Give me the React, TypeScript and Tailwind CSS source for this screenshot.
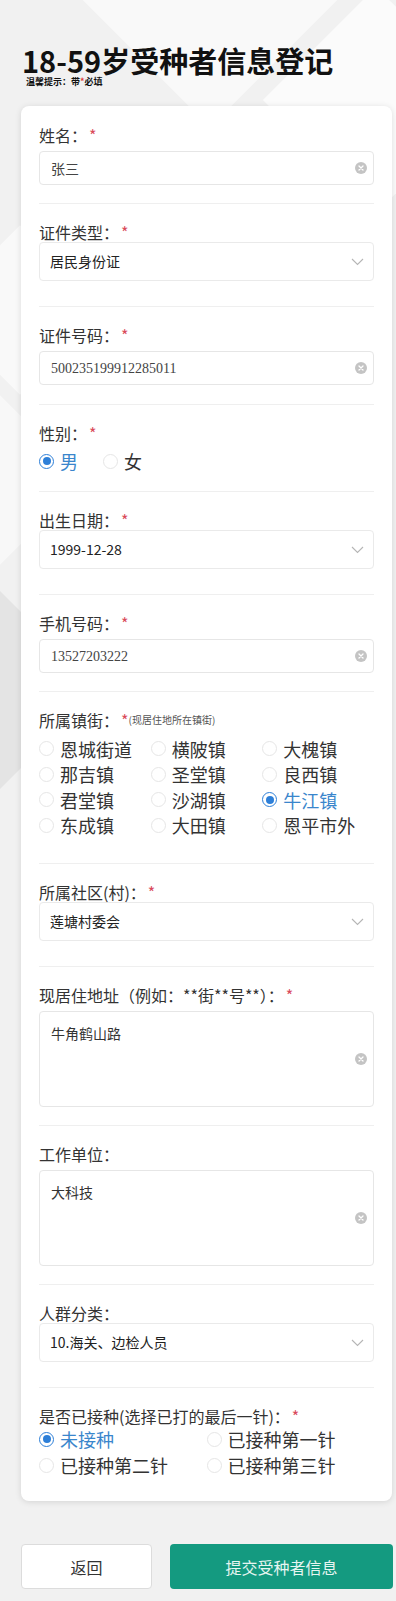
import React from 'react';

const towns = [
    '恩城街道', '横陂镇', '大槐镇',
    '那吉镇', '圣堂镇', '良西镇',
    '君堂镇', '沙湖镇', '牛江镇',
    '东成镇', '大田镇', '恩平市外',
];

const doses = ['未接种', '已接种第一针', '已接种第二针', '已接种第三针'];

function Label({ text, required, hint }: { text: string; required?: boolean; hint?: string }) {
    return (
        <div className="flex h-5 items-center text-[16px] leading-5 text-[#333]">
            <span>{text}</span>
            {required && <span className="ml-[2px] text-[#d94a5a]">*</span>}
            {hint && <span className="text-[10px] text-[#555]">{hint}</span>}
        </div>
    );
}

function ClearIcon() {
    return (
        <svg width="12" height="12" viewBox="0 0 12 12" className="shrink-0">
            <circle cx="6" cy="6" r="6" fill="#c4c4c4" />
            <path d="M4 4L8 8M8 4L4 8" stroke="#fff" strokeWidth="1.3" strokeLinecap="round" />
        </svg>
    );
}

function Chevron() {
    return (
        <svg width="13" height="8" viewBox="0 0 13 8" className="shrink-0">
            <path d="M1 1L6.5 6.5L12 1" fill="none" stroke="#b5b5b5" strokeWidth="1.1" />
        </svg>
    );
}

function TextInput({ value, serif }: { value: string; serif?: boolean }) {
    return (
        <div className="mt-[6px] flex h-[34px] items-center justify-between rounded-[4px] border border-[#e6e6e6] pl-[11px] pr-[6px]">
            <span className={serif ? "font-['Liberation_Serif','Noto_Sans_CJK_SC',serif] text-[14px] text-[#444]" : "text-[14px] text-[#444]"}>{value}</span>
            <ClearIcon />
        </div>
    );
}

function Select({ value }: { value: string }) {
    return (
        <div className="flex h-[39px] items-center justify-between rounded-[4px] border border-[#eaeaea] pl-[10px] pr-[9px]">
            <span className="text-[14px] text-[#222]">{value}</span>
            <Chevron />
        </div>
    );
}

function TextArea({ value }: { value: string }) {
    return (
        <div className="relative mt-[6px] h-[96px] rounded-[4px] border border-[#e6e6e6] pl-[11px] pr-[6px] pt-[8px]">
            <span className="text-[14px] leading-5 text-[#333]">{value}</span>
            <div className="absolute right-[6px] top-1/2 -translate-y-1/2">
                <ClearIcon />
            </div>
        </div>
    );
}

function Radio({ label, checked }: { label: string; checked?: boolean }) {
    return (
        <div className="flex items-center gap-[6px]">
            {checked ? (
                <span className="flex h-[15px] w-[15px] items-center justify-center rounded-full border border-[#2d7fd8] bg-white">
                    <span className="h-[8px] w-[8px] rounded-full bg-[#2d7fd8]" />
                </span>
            ) : (
                <span className="h-[15px] w-[15px] rounded-full border border-[#e6e6e6] bg-white" />
            )}
            <span className={checked ? 'text-[18px] leading-6 text-[#3a86cc]' : 'text-[18px] leading-6 text-[#333]'}>{label}</span>
        </div>
    );
}

function Section({ children, first, pb }: { children: React.ReactNode; first?: boolean; pb: string }) {
    return (
        <div className={(first ? 'pt-[19px] ' : 'border-t border-[#efefef] pt-[18px] ') + pb}>
            {children}
        </div>
    );
}

export default function App() {
    return (
        <div className="relative min-h-[1601px] overflow-hidden bg-[#f1f1f1] font-['Noto_Sans_CJK_SC','Noto_Sans',sans-serif]">
            {/* background decoration */}
            <div className="pointer-events-none absolute -left-[40px] top-[250px] h-[120px] w-[120px] rotate-45 bg-white/60" />
            <div className="pointer-events-none absolute -left-[60px] top-[420px] h-[120px] w-[120px] rotate-45 bg-white/50" />
            <div className="pointer-events-none absolute -left-[70px] top-[620px] h-[140px] w-[140px] rotate-45 bg-[#e4e4e4]" />
            <div className="pointer-events-none absolute -right-[60px] top-[20px] h-[160px] w-[160px] rotate-45 bg-white/70" />
            <div className="pointer-events-none absolute left-[120px] -top-[90px] h-[180px] w-[180px] rotate-45 bg-white/60" />

            <div className="relative flex flex-col pt-[45px]">
                <h1 className="pl-[22px] text-[29px] font-bold leading-[30px] text-[#111]">18-59岁受种者信息登记</h1>
                <div className="mt-[1px] flex pl-[26px] text-[9px] font-bold leading-3 text-[#111]">
                    <span>温馨提示：带</span>
                    <span className="text-[#e03a3a]">*</span>
                    <span>必填</span>
                </div>

                <div className="ml-[21px] mr-[4px] mt-[18px] rounded-[8px] bg-white px-[18px] shadow-[0_1px_6px_rgba(0,0,0,0.12)]">
                    <Section first pb="pb-[18px]">
                        <Label text="姓名：" required />
                        <TextInput value="张三" />
                    </Section>
                    <Section pb="pb-[25px]">
                        <Label text="证件类型：" required />
                        <Select value="居民身份证" />
                    </Section>
                    <Section pb="pb-[19px]">
                        <Label text="证件号码：" required />
                        <TextInput value="500235199912285011" serif />
                    </Section>
                    <Section pb="pb-[18px]">
                        <Label text="性别：" required />
                        <div className="mt-[6px] flex gap-[25px]">
                            <Radio label="男" checked />
                            <Radio label="女" />
                        </div>
                    </Section>
                    <Section pb="pb-[25px]">
                        <Label text="出生日期：" required />
                        <Select value="1999-12-28" />
                    </Section>
                    <Section pb="pb-[18px]">
                        <Label text="手机号码：" required />
                        <TextInput value="13527203222" serif />
                    </Section>
                    <Section pb="pb-[25px]">
                        <Label text="所属镇街：" required hint="(现居住地所在镇街)" />
                        <div className="mt-[6px] grid grid-cols-3">
                            {towns.map((t) => (
                                <div key={t} className="flex h-[25.5px] items-center">
                                    <Radio label={t} checked={t === '牛江镇'} />
                                </div>
                            ))}
                        </div>
                    </Section>
                    <Section pb="pb-[25px]">
                        <Label text="所属社区(村)：" required />
                        <Select value="莲塘村委会" />
                    </Section>
                    <Section pb="pb-[18px]">
                        <Label text="现居住地址（例如：**街**号**）：" required />
                        <TextArea value="牛角鹤山路" />
                    </Section>
                    <Section pb="pb-[18px]">
                        <Label text="工作单位：" />
                        <TextArea value="大科技" />
                    </Section>
                    <Section pb="pb-[25px]">
                        <Label text="人群分类：" />
                        <Select value="10.海关、边检人员" />
                    </Section>
                    <Section pb="pb-[23px]">
                        <Label text="是否已接种(选择已打的最后一针)：" required />
                        <div className="grid grid-cols-2">
                            {doses.map((d) => (
                                <div key={d} className="flex h-[26px] items-center">
                                    <Radio label={d} checked={d === '未接种'} />
                                </div>
                            ))}
                        </div>
                    </Section>
                </div>

                <div className="mt-[43px] flex gap-[18px] pb-[10px] pl-[21px] pr-[3px]">
                    <button className="flex h-[45px] w-[131px] items-center justify-center rounded-[4px] border border-[#dcdcdc] bg-white text-[16px] text-[#333]">
                        返回
                    </button>
                    <button className="flex h-[45px] flex-1 items-center justify-center rounded-[4px] bg-[#149a80] text-[16px] text-[#e6f5f1]">
                        提交受种者信息
                    </button>
                </div>
            </div>
        </div>
    );
}
